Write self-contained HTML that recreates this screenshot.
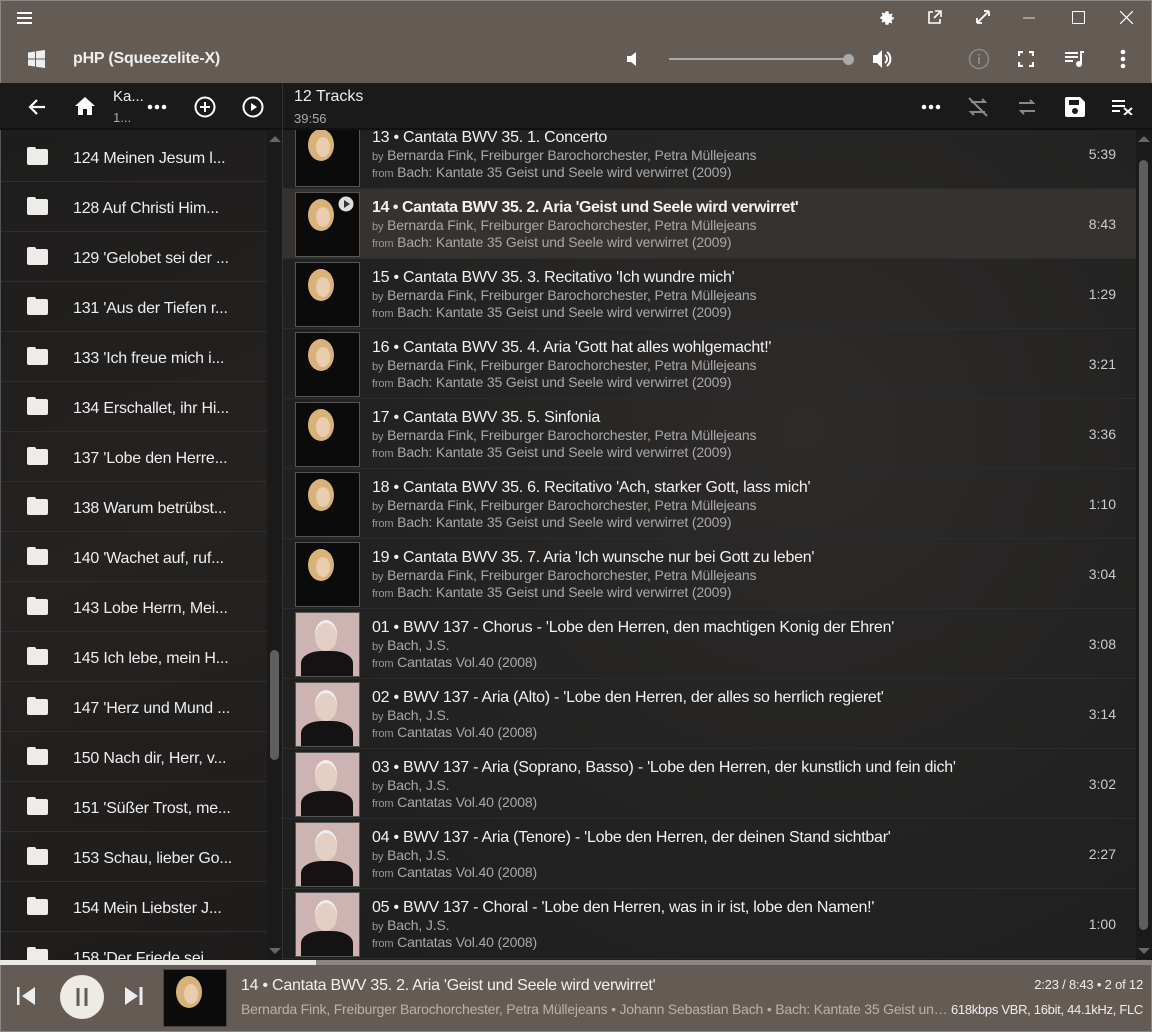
<!DOCTYPE html>
<html><head><meta charset="utf-8"><style>
*{margin:0;padding:0;box-sizing:border-box}
body{width:1152px;height:1032px;overflow:hidden;background:#1c1b1b;font-family:"Liberation Sans",sans-serif;position:relative;color:#fff}
.a{position:absolute}
.top{left:0;top:0;width:1152px;height:83px;background:#655b55;border:1px solid #888;border-bottom:none}
.bar{left:0;top:83px;width:1152px;height:47px;background:#1a1a1a;border-bottom:2px solid #111}
.left{left:0;top:130px;width:282px;height:830px;background:linear-gradient(160deg,#1e1d1d,#252220 50%,#1e1c1b);overflow:hidden;border-left:1px solid #555}
.lrow{position:absolute;left:0;width:266px;height:50px;border-bottom:1px solid #2e2e2e}
.lrow .f{position:absolute;left:26px;top:17px;width:21px;height:16px;background:#eeece8;border-radius:2px}
.lrow .f:before{content:"";position:absolute;left:0;top:-2px;width:9px;height:3px;background:#eeece8;border-radius:2px 2px 0 0}
.lrow span{position:absolute;left:72px;top:18px;font-size:16px;color:#eee;letter-spacing:-0.2px}
.right{left:283px;top:130px;width:869px;height:830px;background:radial-gradient(ellipse at 520px 300px,#2e2b29,#222 60%,#1e1e1e);overflow:hidden}
.trow{position:absolute;left:0;width:853px;height:70px;border-bottom:1px solid #2c2c2c}
.trow.sel{background:#353230}
.th{position:absolute;left:12px;top:3px;width:65px;height:65px;border:1px solid #555;overflow:hidden}
.w{background:#0c0b0b}
.w:before{content:"";position:absolute;left:12px;top:6px;width:26px;height:32px;border-radius:50%;background:#d9b27a}
.w:after{content:"";position:absolute;left:20px;top:14px;width:14px;height:20px;border-radius:50%;background:#e9cdb0}
.m{background:#cdb3b2}
.m:before{content:"";position:absolute;left:5px;top:38px;width:52px;height:30px;border-radius:40% 40% 0 0;background:#151214}
.m:after{content:"";position:absolute;left:19px;top:10px;width:22px;height:28px;border-radius:50%;background:#e3cfc4;box-shadow:0 -3px 0 #eee}
.tt{position:absolute;left:89px;top:10px;font-size:16px;color:#f2f2f2;white-space:nowrap;letter-spacing:-0.25px}
.l2,.l3{position:absolute;left:89px;font-size:14px;color:#a9a9a9;white-space:nowrap;letter-spacing:-0.15px}
.l2{top:28px}.l3{top:45px}
.sm{font-size:11px;color:#999}
.du{position:absolute;right:20px;top:27px;font-size:14px;color:#ccc}
.bottom{left:0;top:965px;width:1152px;height:67px;background:#655b55;border:1px solid #888;border-top:none}
svg{position:absolute}
</style></head><body>
<div class="a top"></div>
<svg style="left:17px;top:12px" width="16" height="12"><path d="M0 1h15M0 6h15M0 11h15" stroke="#fff" stroke-width="2"/></svg>
<svg style="left:878px;top:9px" width="18" height="18" viewBox="0 0 24 24"><path fill="#fff" d="M12 8a4 4 0 100 8 4 4 0 000-8zm9 5v-2l-2.3-.4-.6-1.5 1.3-1.9-1.4-1.4-1.9 1.3-1.5-.6L14 3h-2-2l-.4 2.3-1.5.6-1.9-1.3-1.4 1.4 1.3 1.9-.6 1.5L3 11v2l2.3.4.6 1.5-1.3 1.9 1.4 1.4 1.9-1.3 1.5.6L10 21h4l.4-2.3 1.5-.6 1.9 1.3 1.4-1.4-1.3-1.9.6-1.5z"/></svg>
<svg style="left:927px;top:10px" width="15" height="15"><path d="M6 2H2v11h11V9M8 1h6v6M14 1L7 8" stroke="#fff" stroke-width="1.6" fill="none"/></svg>
<svg style="left:976px;top:10px" width="14" height="14"><path d="M1 13L13 1M1 13v-5M1 13h5M13 1v5M13 1H8" stroke="#fff" stroke-width="1.8" fill="none"/></svg>
<svg style="left:1023px;top:17px" width="12" height="2"><path d="M0 1h12" stroke="#ddd"/></svg>
<svg style="left:1072px;top:11px" width="13" height="13"><rect x=".5" y=".5" width="12" height="12" stroke="#fff" fill="none"/></svg>
<svg style="left:1120px;top:11px" width="13" height="13"><path d="M0 0l13 13M13 0L0 13" stroke="#fff" stroke-width="1.2"/></svg>
<svg style="left:28px;top:50px" width="17" height="18"><path fill="#eee" d="M0 2.5l7-1v7H0zM8 1.3L17 0v8.5H8zM0 9.5h7v7l-7-1zM8 9.5h9V18l-9-1.3z"/></svg>
<div class="a" style="left:73px;top:50px;font-size:16px;font-weight:bold;color:#eee;letter-spacing:-0.2px">pHP (Squeezelite-X)</div>
<svg style="left:626px;top:51px" width="16" height="16"><path fill="#fff" d="M1 5h4l5-4v14l-5-4H1z"/></svg>
<div class="a" style="left:669px;top:58px;width:180px;height:2px;background:#aaa"></div>
<div class="a" style="left:843px;top:54px;width:11px;height:11px;border-radius:50%;background:#aaa"></div>
<svg style="left:872px;top:49px" width="22" height="20"><path fill="#fff" d="M1 6h4l5-5v18l-5-5H1z"/><path d="M13 6a5 5 0 010 8M15 3a9 9 0 010 14" stroke="#fff" stroke-width="2" fill="none"/></svg>
<svg style="left:968px;top:48px" width="22" height="22"><circle cx="11" cy="11" r="9.5" stroke="#888" stroke-width="1.6" fill="none"/><path d="M11 9v7M11 6v1.5" stroke="#888" stroke-width="2"/></svg>
<svg style="left:1018px;top:51px" width="16" height="16"><path d="M1 5V1h4M11 1h4v4M15 11v4h-4M5 15H1v-4" stroke="#fff" stroke-width="2.2" fill="none"/></svg>
<svg style="left:1065px;top:51px" width="20" height="17"><path d="M0 2h13M0 6h13M0 10h8" stroke="#fff" stroke-width="2"/><path d="M15 1h4M16 1v12" stroke="#fff" stroke-width="2"/><circle cx="14" cy="13" r="3" fill="#fff"/></svg>
<svg style="left:1120px;top:49px" width="6" height="20"><circle cx="3" cy="3" r="2.3" fill="#fff"/><circle cx="3" cy="10" r="2.3" fill="#fff"/><circle cx="3" cy="17" r="2.3" fill="#fff"/></svg>
<div class="a bar"></div>
<div class="a" style="left:282px;top:83px;width:1px;height:47px;background:#333"></div>
<svg style="left:28px;top:98px" width="18" height="18"><path d="M17 9H3M9 2L2 9l7 7" stroke="#fff" stroke-width="2.2" fill="none"/></svg>
<svg style="left:75px;top:97px" width="20" height="18"><path fill="#fff" d="M10 0l10 9h-3v9h-5v-6H8v6H3V9H0z"/></svg>
<div class="a" style="left:113px;top:88px;font-size:15px;color:#eee">Ka...</div>
<div class="a" style="left:113px;top:110px;font-size:13px;color:#aaa">1...</div>
<svg style="left:147px;top:104px" width="20" height="6"><circle cx="3" cy="3" r="2.3" fill="#fff"/><circle cx="10" cy="3" r="2.3" fill="#fff"/><circle cx="17" cy="3" r="2.3" fill="#fff"/></svg>
<svg style="left:194px;top:96px" width="22" height="22"><circle cx="11" cy="11" r="9.5" stroke="#fff" stroke-width="2" fill="none"/><path d="M11 6v10M6 11h10" stroke="#fff" stroke-width="2"/></svg>
<svg style="left:242px;top:96px" width="22" height="22"><circle cx="11" cy="11" r="9.5" stroke="#fff" stroke-width="2" fill="none"/><path d="M9 7v8l6-4z" fill="#fff"/></svg>
<div class="a" style="left:294px;top:88px;font-size:16px;color:#eee">12 Tracks</div>
<div class="a" style="left:294px;top:111px;font-size:13px;color:#aaa">39:56</div>
<svg style="left:921px;top:104px" width="20" height="6"><circle cx="3" cy="3" r="2.3" fill="#fff"/><circle cx="10" cy="3" r="2.3" fill="#fff"/><circle cx="17" cy="3" r="2.3" fill="#fff"/></svg>
<svg style="left:968px;top:97px" width="22" height="20"><path d="M3 5h14l-3-3M17 15H3l3 3M1 1l18 18" stroke="#888" stroke-width="2" fill="none"/></svg>
<svg style="left:1018px;top:99px" width="18" height="16"><path d="M1 4h14l-3-3M17 12H3l3 3" stroke="#888" stroke-width="2" fill="none"/></svg>
<svg style="left:1065px;top:97px" width="20" height="20"><path fill="#fff" d="M0 2a2 2 0 012-2h13l5 5v13a2 2 0 01-2 2H2a2 2 0 01-2-2zM4 3v5h10V3z"/><circle cx="10" cy="14" r="3" fill="#1a1a1a"/></svg>
<svg style="left:1112px;top:100px" width="22" height="15"><path d="M0 1h13M0 6h13M0 11h8" stroke="#fff" stroke-width="2"/><path d="M12 8l8 7M20 8l-8 7" stroke="#fff" stroke-width="2"/></svg>
<div class="a left">
<div class="lrow" style="top:2px"><i class="f"></i><span>124 Meinen Jesum l...</span></div>
<div class="lrow" style="top:52px"><i class="f"></i><span>128 Auf Christi Him...</span></div>
<div class="lrow" style="top:102px"><i class="f"></i><span>129 'Gelobet sei der ...</span></div>
<div class="lrow" style="top:152px"><i class="f"></i><span>131 'Aus der Tiefen r...</span></div>
<div class="lrow" style="top:202px"><i class="f"></i><span>133 'Ich freue mich i...</span></div>
<div class="lrow" style="top:252px"><i class="f"></i><span>134 Erschallet, ihr Hi...</span></div>
<div class="lrow" style="top:302px"><i class="f"></i><span>137 'Lobe den Herre...</span></div>
<div class="lrow" style="top:352px"><i class="f"></i><span>138 Warum betrübst...</span></div>
<div class="lrow" style="top:402px"><i class="f"></i><span>140 'Wachet auf, ruf...</span></div>
<div class="lrow" style="top:452px"><i class="f"></i><span>143 Lobe Herrn, Mei...</span></div>
<div class="lrow" style="top:502px"><i class="f"></i><span>145 Ich lebe, mein H...</span></div>
<div class="lrow" style="top:552px"><i class="f"></i><span>147 'Herz und Mund ...</span></div>
<div class="lrow" style="top:602px"><i class="f"></i><span>150 Nach dir, Herr, v...</span></div>
<div class="lrow" style="top:652px"><i class="f"></i><span>151 'Süßer Trost, me...</span></div>
<div class="lrow" style="top:702px"><i class="f"></i><span>153 Schau, lieber Go...</span></div>
<div class="lrow" style="top:752px"><i class="f"></i><span>154 Mein Liebster J...</span></div>
<div class="lrow" style="top:802px"><i class="f"></i><span>158 'Der Friede sei...</span></div>
<div class="a" style="left:266px;top:0;width:16px;height:830px;background:#1a1a1a"></div>
<div class="a" style="left:269px;top:520px;width:9px;height:110px;border-radius:5px;background:#5e5e5e"></div>
<svg style="left:268px;top:5px" width="12" height="8"><path d="M0 7l6-6 6 6z" fill="#666"/></svg>
<svg style="left:268px;top:817px" width="12" height="8"><path d="M0 1l6 6 6-6z" fill="#666"/></svg>
</div>
<div class="a" style="left:282px;top:130px;width:1px;height:830px;background:#333"></div>
<div class="a right">
<div class="trow" style="top:-11px"><div class="th w"></div><div class="tt">13 • Cantata BWV 35. 1. Concerto</div><div class="l2"><span class="sm">by</span> Bernarda Fink, Freiburger Barochorchester, Petra Müllejeans</div><div class="l3"><span class="sm">from</span> Bach: Kantate 35 Geist und Seele wird verwirret (2009)</div><div class="du">5:39</div></div>
<div class="trow sel" style="top:59px"><div class="th w"><svg style="left:42px;top:3px;z-index:2" width="16" height="16"><circle cx="8" cy="8" r="7.5" fill="#ddd"/><path d="M6 4v8l6-4z" fill="#333"/></svg></div><div class="tt" style="font-weight:bold;letter-spacing:-0.45px">14 • Cantata BWV 35. 2. Aria 'Geist und Seele wird verwirret'</div><div class="l2"><span class="sm">by</span> Bernarda Fink, Freiburger Barochorchester, Petra Müllejeans</div><div class="l3"><span class="sm">from</span> Bach: Kantate 35 Geist und Seele wird verwirret (2009)</div><div class="du">8:43</div></div>
<div class="trow" style="top:129px"><div class="th w"></div><div class="tt">15 • Cantata BWV 35. 3. Recitativo 'Ich wundre mich'</div><div class="l2"><span class="sm">by</span> Bernarda Fink, Freiburger Barochorchester, Petra Müllejeans</div><div class="l3"><span class="sm">from</span> Bach: Kantate 35 Geist und Seele wird verwirret (2009)</div><div class="du">1:29</div></div>
<div class="trow" style="top:199px"><div class="th w"></div><div class="tt">16 • Cantata BWV 35. 4. Aria 'Gott hat alles wohlgemacht!'</div><div class="l2"><span class="sm">by</span> Bernarda Fink, Freiburger Barochorchester, Petra Müllejeans</div><div class="l3"><span class="sm">from</span> Bach: Kantate 35 Geist und Seele wird verwirret (2009)</div><div class="du">3:21</div></div>
<div class="trow" style="top:269px"><div class="th w"></div><div class="tt">17 • Cantata BWV 35. 5. Sinfonia</div><div class="l2"><span class="sm">by</span> Bernarda Fink, Freiburger Barochorchester, Petra Müllejeans</div><div class="l3"><span class="sm">from</span> Bach: Kantate 35 Geist und Seele wird verwirret (2009)</div><div class="du">3:36</div></div>
<div class="trow" style="top:339px"><div class="th w"></div><div class="tt">18 • Cantata BWV 35. 6. Recitativo 'Ach, starker Gott, lass mich'</div><div class="l2"><span class="sm">by</span> Bernarda Fink, Freiburger Barochorchester, Petra Müllejeans</div><div class="l3"><span class="sm">from</span> Bach: Kantate 35 Geist und Seele wird verwirret (2009)</div><div class="du">1:10</div></div>
<div class="trow" style="top:409px"><div class="th w"></div><div class="tt">19 • Cantata BWV 35. 7. Aria 'Ich wunsche nur bei Gott zu leben'</div><div class="l2"><span class="sm">by</span> Bernarda Fink, Freiburger Barochorchester, Petra Müllejeans</div><div class="l3"><span class="sm">from</span> Bach: Kantate 35 Geist und Seele wird verwirret (2009)</div><div class="du">3:04</div></div>
<div class="trow" style="top:479px"><div class="th m"></div><div class="tt">01 • BWV 137 - Chorus - 'Lobe den Herren, den machtigen Konig der Ehren'</div><div class="l2"><span class="sm">by</span> Bach, J.S.</div><div class="l3"><span class="sm">from</span> Cantatas Vol.40 (2008)</div><div class="du">3:08</div></div>
<div class="trow" style="top:549px"><div class="th m"></div><div class="tt">02 • BWV 137 - Aria (Alto) - 'Lobe den Herren, der alles so herrlich regieret'</div><div class="l2"><span class="sm">by</span> Bach, J.S.</div><div class="l3"><span class="sm">from</span> Cantatas Vol.40 (2008)</div><div class="du">3:14</div></div>
<div class="trow" style="top:619px"><div class="th m"></div><div class="tt">03 • BWV 137 - Aria (Soprano, Basso) - 'Lobe den Herren, der kunstlich und fein dich'</div><div class="l2"><span class="sm">by</span> Bach, J.S.</div><div class="l3"><span class="sm">from</span> Cantatas Vol.40 (2008)</div><div class="du">3:02</div></div>
<div class="trow" style="top:689px"><div class="th m"></div><div class="tt">04 • BWV 137 - Aria (Tenore) - 'Lobe den Herren, der deinen Stand sichtbar'</div><div class="l2"><span class="sm">by</span> Bach, J.S.</div><div class="l3"><span class="sm">from</span> Cantatas Vol.40 (2008)</div><div class="du">2:27</div></div>
<div class="trow" style="top:759px"><div class="th m"></div><div class="tt">05 • BWV 137 - Choral - 'Lobe den Herren, was in ir ist, lobe den Namen!'</div><div class="l2"><span class="sm">by</span> Bach, J.S.</div><div class="l3"><span class="sm">from</span> Cantatas Vol.40 (2008)</div><div class="du">1:00</div></div>
<div class="a" style="left:853px;top:0;width:16px;height:830px;background:#1a1a1a"></div>
<div class="a" style="left:856px;top:30px;width:9px;height:770px;border-radius:5px;background:#5e5e5e"></div>
<svg style="left:855px;top:5px" width="12" height="8"><path d="M0 7l6-6 6 6z" fill="#666"/></svg>
<svg style="left:855px;top:817px" width="12" height="8"><path d="M0 1l6 6 6-6z" fill="#666"/></svg>
</div>
<div class="a" style="left:0;top:960px;width:1152px;height:5px;background:#8c847e"></div>
<div class="a" style="left:0;top:960px;width:316px;height:5px;background:#ebe7e2"></div>
<div class="a bottom"></div>
<svg style="left:17px;top:986px" width="20" height="20"><path d="M1 1v18" stroke="#eee" stroke-width="3"/><path d="M18 1v18L5 10z" fill="#eee"/></svg>
<div class="a" style="left:60px;top:975px;width:44px;height:44px;border-radius:50%;background:#eeeae5"></div>
<svg style="left:75px;top:988px" width="14" height="18"><path d="M3 0v18M11 0v18" stroke="#655b55" stroke-width="3"/></svg>
<svg style="left:123px;top:986px" width="20" height="20"><path d="M2 1v18l13-9z" fill="#eee"/><path d="M18 1v18" stroke="#eee" stroke-width="3"/></svg>
<div class="a th w" style="left:163px;top:969px;width:64px;height:58px;border-color:#444"></div>
<div class="a" style="left:241px;top:977px;font-size:16px;color:#f0f0f0;white-space:nowrap;letter-spacing:-0.25px">14 • Cantata BWV 35. 2. Aria 'Geist und Seele wird verwirret'</div>
<div class="a" style="left:241px;top:1001px;width:712px;overflow:hidden;text-overflow:ellipsis;font-size:14px;color:#b9b2ac;white-space:nowrap;letter-spacing:-0.2px">Bernarda Fink, Freiburger Barochorchester, Petra Müllejeans • Johann Sebastian Bach • Bach: Kantate 35 Geist und Seele wird verwirret</div>
<div class="a" style="right:9px;top:977px;font-size:13px;color:#eee;letter-spacing:-0.2px">2:23 / 8:43 • 2 of 12</div>
<div class="a" style="right:9px;top:1002px;font-size:13px;color:#eee;letter-spacing:-0.3px">618kbps VBR, 16bit, 44.1kHz, FLC</div>
</body></html>
